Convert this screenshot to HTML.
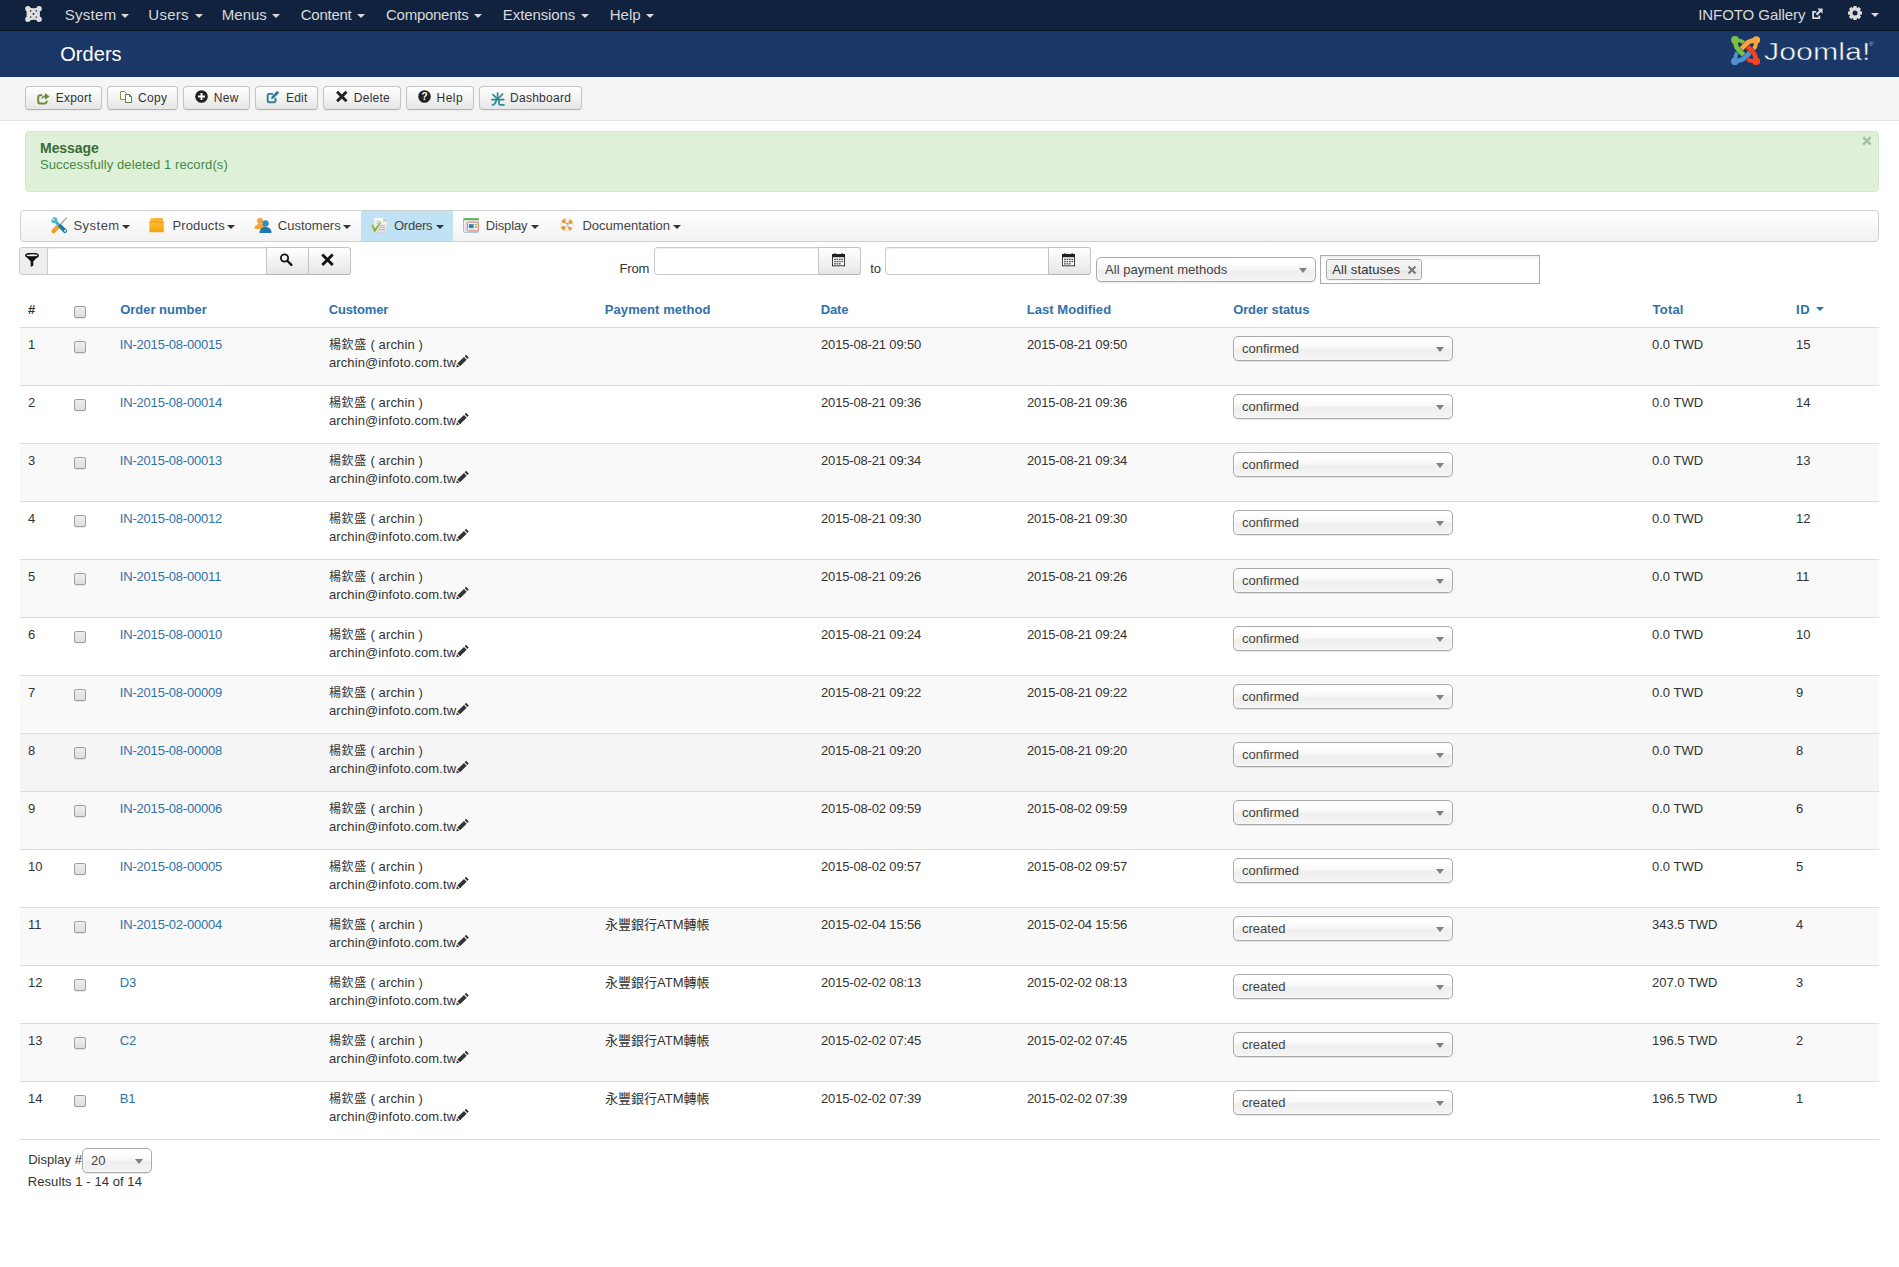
<!DOCTYPE html>
<html lang="en">
<head>
<meta charset="utf-8">
<title>Orders</title>
<style>
*{box-sizing:border-box}
html,body{margin:0;padding:0}
body{width:1899px;height:1267px;overflow:hidden;background:#fff;color:#333;font-family:"Liberation Sans","Noto Sans CJK TC",sans-serif;font-size:13px;line-height:18px;position:relative}
a{color:#3071a9;text-decoration:none}
svg{display:block}
/* navbar */
#nav{position:absolute;left:0;top:0;width:1899px;height:31px;background:#10223e;border-bottom:1px solid #0b1626}
#nav .logo{position:absolute;left:25px;top:6px}
#nav ul{list-style:none;margin:0;padding:0;position:absolute;left:55px;top:0}
#nav li{float:left;padding:0 10px;height:30px;line-height:30px;font-size:15px;color:#d9d9d9}
#nav .car{display:block;width:0;height:0;border-left:4px solid transparent;border-right:4px solid transparent;border-top:4px solid #d9d9d9;}
.rnav{position:absolute;top:0;height:30px;line-height:30px;font-size:15px;color:#d9d9d9}

.fx{position:relative;display:inline-block;white-space:nowrap}
.ni{position:absolute;top:0;height:30px;line-height:30px;font-size:15px;color:#d9d9d9;white-space:nowrap}
.sc{position:absolute;display:block;width:0;height:0;border-left:4px solid transparent;border-right:4px solid transparent;border-top:4px solid #3071a9}
.cN{letter-spacing:-0.2px}.cN a{position:relative;left:-0.2px}.cj{font-size:12px;letter-spacing:0.6px;position:relative;top:0.8px}.cj2{position:relative;top:0.8px}.c1{letter-spacing:0.12px}.c2{letter-spacing:0.1px}.cD{letter-spacing:-0.16px}
.cal svg{position:absolute;left:12.5px;top:5px}
/* header */
#header{position:absolute;left:0;top:31px;width:1899px;height:46px;background:#1a3867}
#header h1{position:absolute;left:61px;top:1px;margin:0;font-size:20px;line-height:45px;font-weight:normal;color:#fff}
/* subhead */
#subhead{position:absolute;left:0;top:77px;width:1899px;height:44px;background:#f5f5f5;border-bottom:1px solid #e3e3e3}
.btn{position:absolute;top:9px;height:24px;border:1px solid #c4c4c4;border-bottom-color:#b3b3b3;border-radius:4px;background:linear-gradient(#fff,#e6e6e6);font-size:12px;line-height:22px;color:#333;box-shadow:0 1px 2px rgba(0,0,0,.05);white-space:nowrap}
.btn span{position:absolute;top:0}
.btn svg{position:absolute}
/* alert */
#alert{position:absolute;left:25px;top:131px;width:1854px;height:61px;background:#dff0d8;border:1px solid #d6e9c6;border-radius:4px;color:#468847}
#alert h4{margin:0;position:absolute;left:14px;top:7px;font-size:14px;line-height:18px;font-weight:bold;color:#376c38}
#alert p{margin:0;position:absolute;left:14px;top:24px;font-size:13px;line-height:18px}
#alert .x{position:absolute;right:5.5px;top:0px;font-size:20px;line-height:18px;color:rgba(0,0,0,.22);font-weight:bold;text-shadow:0 1px 0 #fff}
/* hika menu */
#hmenu{position:absolute;left:20px;top:210px;width:1859px;height:32px;border:1px solid #d0d0d0;border-radius:4px;background:linear-gradient(#fff,#f2f2f2)}
#hmenu .it{position:absolute;top:0;height:30px;line-height:29px;font-size:13px;color:#444}
#hmenu .it.act{background:#c0e2f5}
#hmenu .it span{position:absolute;top:0;white-space:nowrap}
#hmenu .it i{position:absolute;top:14px;width:0;height:0;border-left:4px solid transparent;border-right:4px solid transparent;border-top:4px solid #333}
#hmenu svg{position:absolute}
/* filters */
.abs{position:absolute}
.inp{position:absolute;background:#fff;border:1px solid #ccc;box-shadow:inset 0 1px 1px rgba(0,0,0,.075)}
.gbtn{position:absolute;border:1px solid #c4c4c4;border-bottom-color:#b3b3b3;background:linear-gradient(#fff,#e6e6e6)}
.sel{position:absolute;border:1px solid #aaa;border-radius:5px;background:linear-gradient(#fff 20%,#f6f6f6 50%,#eee 52%,#f4f4f4 100%);box-shadow:0 0 3px #fff inset,0 1px 1px rgba(0,0,0,.1);color:#444;font-size:13px;white-space:nowrap}
.sel span{position:absolute;left:8px;top:0}
.sel i{position:absolute;right:8.5px;width:0;height:0;border-left:4px solid transparent;border-right:4px solid transparent;border-top:5px solid #808080}
/* table */
#tbl{position:absolute;left:20px;top:291px;width:1859px;border-collapse:collapse;table-layout:fixed}
#tbl th{height:36px;padding:10px 8px 0 8px;position:relative;text-align:left;vertical-align:top;font-weight:bold;color:#3071a9;line-height:18px;white-space:nowrap}
#tbl th.n{color:#333}
#tbl td{height:58px;padding:8px 8px 0 8px;vertical-align:top;border-top:1px solid #ddd;line-height:18px;white-space:nowrap}
#tbl tr.last td{border-bottom:1px solid #ddd}
#tbl tr.o td{background:#f9f9f9}
#tbl tr.hv td{background:#f5f5f5}
.cb{display:block;width:12px;height:12px;border:1px solid #a0a0a0;border-radius:2px;background:linear-gradient(#ededed,#dedede);box-shadow:0 1px 0 rgba(0,0,0,.08);margin:5px 0 0 -1px}
th .cb{margin-top:5px}
.ssel{position:relative;display:block;width:220px;height:25px;margin-top:0;border:1px solid #aaa;border-radius:5px;background:linear-gradient(#fff 20%,#f6f6f6 50%,#eee 52%,#f4f4f4 100%);box-shadow:0 0 3px #fff inset,0 1px 1px rgba(0,0,0,.1);color:#444;line-height:23px;padding-left:8px}
.ssel i{position:absolute;right:8.5px;top:10px;width:0;height:0;border-left:4px solid transparent;border-right:4px solid transparent;border-top:5px solid #808080}
.pw{position:relative;display:inline-block;width:14px;height:1px;vertical-align:baseline}.pen{position:absolute;left:-0.3px;top:-11.6px}
</style>
</head>
<body>
<div id="nav">
<svg class="logo" width="17" height="16" viewBox="0 0 17 16"><g fill="#dfdfdf"><circle cx="2.9" cy="2.7" r="2.7"/><circle cx="14.1" cy="2.7" r="2.7"/><circle cx="2.9" cy="13.3" r="2.7"/><circle cx="14.1" cy="13.3" r="2.7"/><path d="M2.5 1 Q8.5 3.6 14.5 1 Q15.4 8 14.5 15 Q8.5 12.4 2.5 15 Q0.6 8 2.5 1 Z"/></g><g fill="#10223e"><circle cx="8.5" cy="8" r="0.95"/><circle cx="5.7" cy="4.9" r="0.8" opacity=".9"/><circle cx="11.3" cy="4.9" r="0.8" opacity=".9"/><circle cx="5.7" cy="11.1" r="0.8" opacity=".9"/><circle cx="11.3" cy="11.1" r="0.8" opacity=".9"/></g></svg>
<div class="ni" style="left:65px"><span id="n0" class="fx" style="left:-0.29px;letter-spacing:0.298px">System</span></div><b class="car abs" style="left:121.2px;top:14px"></b>
<div class="ni" style="left:149px"><span id="n1" class="fx" style="left:-0.72px;letter-spacing:0.293px">Users</span></div><b class="car abs" style="left:195.2px;top:14px"></b>
<div class="ni" style="left:223px"><span id="n2" class="fx" style="left:-1.16px;letter-spacing:-0.017px">Menus</span></div><b class="car abs" style="left:272.2px;top:14px"></b>
<div class="ni" style="left:301px"><span id="n3" class="fx" style="left:-0.21px;letter-spacing:-0.273px">Content</span></div><b class="car abs" style="left:357.2px;top:14px"></b>
<div class="ni" style="left:386px"><span id="n4" class="fx" style="left:0.06px;letter-spacing:-0.274px">Components</span></div><b class="car abs" style="left:474.2px;top:14px"></b>
<div class="ni" style="left:503px"><span id="n5" class="fx" style="left:-0.16px;letter-spacing:-0.098px">Extensions</span></div><b class="car abs" style="left:581.2px;top:14px"></b>
<div class="ni" style="left:610px"><span id="n6" class="fx" style="left:-0.36px;letter-spacing:0.069px">Help</span></div><b class="car abs" style="left:646.2px;top:14px"></b>

<div class="ni" style="left:1699px"><span id="n7" class="fx" style="left:-0.84px;letter-spacing:-0.064px">INFOTO Gallery</span></div>
<svg class="abs" style="left:1810.8px;top:8.4px" width="12.4" height="12" viewBox="0 0 12 12"><path d="M1 3 H5 V4.8 H2.8 V9.2 H7.2 V7.6 H9 V11 H1 Z" fill="#d9d9d9"/><path d="M6.2 0.6 H11.4 V5.8 L9.6 4 L6 7.6 L4.4 6 L8 2.4 Z" fill="#d9d9d9"/></svg>
<svg class="abs" style="left:1847.7px;top:6.2px" width="14" height="14" viewBox="0 0 14 14"><g fill="#dcdcdc"><circle cx="7" cy="7" r="5.5"/><rect x="5.2" y="0" width="3.6" height="14" rx="0.7" transform="rotate(0 7 7)"/><rect x="5.2" y="0" width="3.6" height="14" rx="0.7" transform="rotate(45 7 7)"/><rect x="5.2" y="0" width="3.6" height="14" rx="0.7" transform="rotate(90 7 7)"/><rect x="5.2" y="0" width="3.6" height="14" rx="0.7" transform="rotate(135 7 7)"/></g><circle cx="7" cy="7" r="2.5" fill="#10223e"/></svg>
<b class="car abs" style="left:1871px;top:13px;margin:0;display:block;border-left:4px solid transparent;border-right:4px solid transparent;border-top:4px solid #d9d9d9;width:0;height:0"></b>
</div>
<div id="header"><h1><span id="t0" class="fx" style="left:-0.85px;letter-spacing:0.069px">Orders</span></h1>
<svg class="abs" style="left:1730.7px;top:4.6px" width="29.2" height="29.4" viewBox="0 0 29.2 29.4"><g fill="none" stroke-linecap="butt"><g transform="rotate(270 14.6 14.7)"><circle cx="4" cy="4" r="3.9" stroke="none" fill="#5091cd"/><path d="M4.6 5 C4.2 9.5 5.4 11.6 7.6 13.8 L12.7 18.9" stroke="#5091cd" stroke-width="4.7"/><path d="M5 4.5 C8.5 4 10.8 4.8 12.9 6.5" stroke="#5091cd" stroke-width="3.9"/></g><g transform="rotate(0 14.6 14.7)"><circle cx="4" cy="4" r="3.9" stroke="none" fill="#7ac143"/><path d="M4.6 5 C4.2 9.5 5.4 11.6 7.6 13.8 L12.7 18.9" stroke="#7ac143" stroke-width="4.7"/><path d="M5 4.5 C8.5 4 10.8 4.8 12.9 6.5" stroke="#7ac143" stroke-width="3.9"/></g><g transform="rotate(90 14.6 14.7)"><circle cx="4" cy="4" r="3.9" stroke="none" fill="#f9a541"/><path d="M4.6 5 C4.2 9.5 5.4 11.6 7.6 13.8 L12.7 18.9" stroke="#f9a541" stroke-width="4.7"/><path d="M5 4.5 C8.5 4 10.8 4.8 12.9 6.5" stroke="#f9a541" stroke-width="3.9"/></g><g transform="rotate(180 14.6 14.7)"><circle cx="4" cy="4" r="3.9" stroke="none" fill="#f44321"/><path d="M4.6 5 C4.2 9.5 5.4 11.6 7.6 13.8 L12.7 18.9" stroke="#f44321" stroke-width="4.7"/><path d="M5 4.5 C8.5 4 10.8 4.8 12.9 6.5" stroke="#f44321" stroke-width="3.9"/></g><g transform="rotate(270 14.6 14.7)"><path d="M9.5 15.7 L12.7 18.9" stroke="#5091cd" stroke-width="4.7"/></g></g></svg>
<div class="abs jm" style="left:1763.6px;top:3.2px;font-size:24.5px;line-height:36px;color:#fff;white-space:nowrap;transform-origin:0 50%;transform:scale(1.24,0.98);-webkit-text-stroke:0.5px #1a3867">Joomla!</div>
<div class="abs" style="left:1869px;top:10px;font-size:6px;line-height:6px;color:#aeb9c9">®</div>
</div>
</div>
<div id="subhead">
<div class="btn" style="left:25px;width:77px"><svg style="left:11px;top:6px" width="13" height="12" viewBox="0 0 13 12"><path d="M5.2 2.2 H3.6 A2.4 2.4 0 0 0 1.2 4.6 V8.2 A2.4 2.4 0 0 0 3.6 10.6 H7.4 A2.4 2.4 0 0 0 9.8 8.2 V7.8" fill="none" stroke="#6d8c3a" stroke-width="2"/><path d="M8 0 L12.6 3.4 L8 6.8 V4.6 C6.4 4.6 5.2 5.2 4.2 6.8 C4.4 4 5.8 2.4 8 2.2 Z" fill="#6d8c3a"/></svg><span style="left:31px"><span id="b0" class="fx" style="left:-1.16px;letter-spacing:0.188px">Export</span></span></div>
<div class="btn" style="left:107px;width:71px"><svg style="left:10.5px;top:3.2px" width="14" height="14" viewBox="0 0 14 14"><path d="M1.5 1.5 H5.5 L7.5 3.5 V9.5 H1.5 Z" fill="#fff" stroke="#8a9a3a" stroke-width="1"/><path d="M6.5 4.5 H10.5 L12.5 6.5 V12.5 H6.5 Z" fill="#fff" stroke="#4f8a4a" stroke-width="1"/><path d="M10.5 4.5 V6.5 H12.5" fill="none" stroke="#4f8a4a" stroke-width="1"/></svg><span style="left:31px"><span id="b1" class="fx" style="left:-1.04px;letter-spacing:0.312px">Copy</span></span></div>
<div class="btn" style="left:183px;width:67px"><svg style="left:11px;top:3px" width="13" height="13" viewBox="0 0 13 13"><circle cx="6.5" cy="6.5" r="6.3" fill="#222"/><path d="M6.5 3 V10 M3 6.5 H10" stroke="#fff" stroke-width="1.9"/></svg><span style="left:31px"><span id="b2" class="fx" style="left:-1.37px;letter-spacing:0.437px">New</span></span></div>
<div class="btn" style="left:255px;width:63px"><svg style="left:10.3px;top:3.2px" width="14" height="14" viewBox="0 0 14 14"><path d="M9.5 8 V11 A1.3 1.3 0 0 1 8.2 12.3 H3 A1.3 1.3 0 0 1 1.7 11 V5.2 A1.3 1.3 0 0 1 3 3.9 H7" fill="none" stroke="#2f7d95" stroke-width="1.9"/><path d="M11.2 0.8 L13.2 2.8 L7.6 8.4 L5 9 L5.6 6.4 Z" fill="#2f7d95"/></svg><span style="left:31px"><span id="b3" class="fx" style="left:-1.02px;letter-spacing:0.229px">Edit</span></span></div>
<div class="btn" style="left:323px;width:78px"><svg style="left:10.5px;top:3px" width="13.6" height="13" viewBox="0 0 13 13"><path d="M1.8 1.8 L11.2 11.2 M11.2 1.8 L1.8 11.2" stroke="#222" stroke-width="3" stroke-linecap="butt"/></svg><span style="left:31px"><span id="b4" class="fx" style="left:-1.2px;letter-spacing:0.251px">Delete</span></span></div>
<div class="btn" style="left:406px;width:68px"><svg style="left:10.8px;top:3.2px" width="13" height="13" viewBox="0 0 13 13"><circle cx="6.5" cy="6.5" r="6.3" fill="#222"/><text x="6.5" y="10" font-size="10" font-weight="bold" text-anchor="middle" fill="#fff" font-family="Liberation Sans, sans-serif">?</text></svg><span style="left:31px"><span id="b5" class="fx" style="left:-1.4px;letter-spacing:0.427px">Help</span></span></div>
<div class="btn" style="left:479px;width:103px"><svg style="left:11px;top:5.3px" width="14" height="14" viewBox="0 0 14 14"><g fill="none" stroke="#2a8a94" stroke-width="1.7" stroke-linecap="round"><path d="M6.6 1 V7"/><path d="M2 2.6 L6.4 7"/><path d="M11.6 2.2 L6.8 7"/><path d="M0.9 7.6 H12.8"/><path d="M5.4 7.8 C5 10.5 3.6 12.2 1.6 13"/><path d="M8 7.8 V11.4 C8 12.6 8.6 12.8 10 12.8 H13"/></g></svg><span style="left:31px"><span id="b6" class="fx" style="left:-1.01px;letter-spacing:0.275px">Dashboard</span></span></div>
</div>
<div id="alert"><h4><span id="a0" class="fx" style="left:0.08px;letter-spacing:-0.08px">Message</span></h4><p><span id="a1" class="fx" style="left:-0.02px;letter-spacing:0.091px">Successfully deleted 1 record(s)</span></p><svg class="abs" style="left:1836.4px;top:4.4px" width="9.8" height="9.8" viewBox="0 0 10 10"><path d="M1.2 1.2 L8.8 8.8 M8.8 1.2 L1.2 8.8" stroke="#a6bea1" stroke-width="2.5"/></svg></div>
<div id="hmenu">
<div class="it" style="left:19px;width:99px"><svg style="left:10.5px;top:5.5px" width="17" height="17" viewBox="0 0 17 17"><path d="M8.8 7.8 L15.6 0.9" stroke="#9a9a9a" stroke-width="1.1" stroke-linecap="round"/><path d="M7.4 9 L2.6 14.2" stroke="#f39a1e" stroke-width="4.2" stroke-linecap="round"/><path d="M6.4 9.6 L3 13.4" stroke="#fbd38a" stroke-width="0.8" stroke-dasharray="1 0.8"/><path d="M5.2 5.2 L8.6 8.4" stroke="#3fa6c6" stroke-width="2.6" stroke-linecap="round"/><circle cx="3.4" cy="3.2" r="3" fill="#4db3d1"/><path d="M0.6 1.2 L3.6 3.4" stroke="#eaf6fa" stroke-width="1.1"/><path d="M9.4 9.4 L14 14" stroke="#1d7a9c" stroke-width="4" stroke-linecap="round"/><circle cx="14.1" cy="13.8" r="1.05" fill="#fff"/></svg><span style="left:35px"><span id="m0" class="fx" style="left:-1.61px;letter-spacing:0.489px">System</span></span><i style="left:81.5px"></i></div>
<div class="it" style="left:118px;width:106px"><svg style="left:10px;top:5.8px" width="15.2" height="16" viewBox="0 0 16 16"><defs><linearGradient id="bx" x1="0" y1="0" x2="0" y2="1"><stop offset="0" stop-color="#fdbd35"/><stop offset="1" stop-color="#f4a20a"/></linearGradient></defs><path d="M0.6 5 L1.8 0.6 H14.2 L15.4 5 Z" fill="#f8b53a"/><path d="M2.2 1.6 H4.6" stroke="#dfe8d0" stroke-width="0.8"/><rect x="0.4" y="4.6" width="15.2" height="11" rx="0.8" fill="url(#bx)"/><path d="M0.4 5 H15.6" stroke="#e9960a" stroke-width="0.8"/></svg><span style="left:34px"><span id="m1" class="fx" style="left:-0.6px;letter-spacing:0.14px">Products</span></span><i style="left:88.3px"></i></div>
<div class="it" style="left:224px;width:116px"><svg style="left:9px;top:6px" width="18" height="17" viewBox="0 0 18 17"><circle cx="6" cy="4" r="3" fill="#f6a131"/><path d="M0.5 12 C0.5 8.5 3 7 6 7 C9 7 11.5 8.5 11.5 12 Z" fill="#f6a131"/><circle cx="11.5" cy="6.5" r="3.2" fill="#2e8fc4"/><path d="M5.5 16 C5.5 12 8 10 11.5 10 C15 10 17.5 12 17.5 16 Z" fill="#1f78ad"/></svg><span style="left:33px"><span id="m2" class="fx" style="left:-0.21px;letter-spacing:0.008px">Customers</span></span><i style="left:98.4px"></i></div>
<div class="it act" style="left:340px;width:92px"><svg style="left:9.5px;top:6px" width="17" height="17" viewBox="0 0 17 17"><defs><linearGradient id="pg" x1="0" y1="0" x2="0" y2="1"><stop offset="0" stop-color="#fdfdfd"/><stop offset="1" stop-color="#dcdcdc"/></linearGradient></defs><path d="M2.8 0.4 H12.2 L16.2 4.4 V15.6 H2.8 Z" fill="url(#pg)" stroke="#cfcfcf" stroke-width="0.5"/><path d="M12.2 0.4 V4.4 H16.2 Z" fill="#c4c4c4"/><path d="M5.5 4.3 H9.5 M5.5 6.4 H9 M8.5 8.4 H14 M8 10.4 H14 M7 12.5 H14" stroke="#b4b4b4" stroke-width="0.9"/><path d="M0.5 8.7 L1.9 7.6 L3.9 11.6 L9.3 4.9 L10.2 5.2 L3.7 15.6 Z" fill="#8cb21c"/></svg><span style="left:33px"><span id="m3" class="fx" style="left:-0.03px;letter-spacing:-0.249px">Orders</span></span><i style="left:74.7px"></i></div>
<div class="it" style="left:432px;width:96px"><svg style="left:10px;top:7px" width="16.4" height="14.8" viewBox="0 0 17 15.4"><rect x="0.5" y="0.5" width="16" height="14.4" rx="1.5" fill="#eef3f7" stroke="#9cbcd4"/><rect x="0.3" y="0.2" width="16.4" height="2.2" rx="1" fill="#62b545"/><rect x="1.4" y="3" width="2.2" height="11" fill="#dfe5ea"/><rect x="4.4" y="4.3" width="11.4" height="9.2" rx="1.2" fill="#fff" stroke="#e0605c" stroke-width="1"/><rect x="6" y="6.4" width="5" height="4.2" fill="#1f86b8"/><rect x="12" y="6" width="2.4" height="1.7" fill="#7cc35a"/><rect x="12" y="8.6" width="2.4" height="1.8" fill="#f39c1f"/><rect x="6.5" y="11.6" width="7" height="0.9" fill="#c9ced3"/></svg><span style="left:34px"><span id="m4" class="fx" style="left:-1.38px;letter-spacing:-0.11px">Display</span></span><i style="left:78.4px"></i></div>
<div class="it" style="left:528px;width:141px"><svg style="left:11.2px;top:7.3px" width="13.6" height="13.6" viewBox="0 0 15 15"><circle cx="7.5" cy="7.5" r="5" fill="none" stroke="#f3f3f3" stroke-width="4.4"/><circle cx="7.5" cy="7.5" r="5" fill="none" stroke="#e8962e" stroke-width="4.4" stroke-dasharray="3.93 3.93" stroke-dashoffset="1.96" transform="rotate(45 7.5 7.5)"/><circle cx="7.5" cy="7.5" r="7.2" fill="none" stroke="#e0d6c8" stroke-width="0.5"/><text x="7.5" y="9.6" font-size="6" text-anchor="middle" fill="#4a8fd0" font-weight="bold" font-family="Liberation Sans, sans-serif">?</text></svg><span style="left:34px"><span id="m5" class="fx" style="left:-0.6px;letter-spacing:0.021px">Documentation</span></span><i style="left:123.5px"></i></div>
</div>
<div id="filters">
<div class="gbtn" style="left:19px;top:247px;width:29px;height:28px;border-radius:3px 0 0 3px;background:#eee;border-color:#ccc"><svg class="abs" style="left:4.8px;top:4.5px" width="14" height="15" viewBox="0 0 14 15"><ellipse cx="7" cy="2.6" rx="6.2" ry="2.2" fill="none" stroke="#111" stroke-width="1.5"/><path d="M0.9 3.2 L5.7 8.4 V14 L8.3 12.6 V8.4 L13.1 3.2 Z" fill="#111"/></svg></div>
<div class="inp" style="left:47px;top:247px;width:220px;height:28px"></div>
<div class="gbtn" style="left:266px;top:247px;width:43px;height:28px"><svg class="abs" style="left:11.5px;top:5px" width="14" height="13" viewBox="0 0 14 14"><circle cx="5.4" cy="5.4" r="3.9" fill="none" stroke="#111" stroke-width="1.9"/><path d="M8.4 8.4 L12.8 12.8" stroke="#111" stroke-width="2.4" stroke-linecap="round"/></svg></div>
<div class="gbtn" style="left:308px;top:247px;width:43px;height:28px;border-radius:0 3px 3px 0"><svg class="abs" style="left:11px;top:5px" width="15" height="13.5" viewBox="0 0 14 14"><path d="M1.6 1.6 L12.4 12.4 M12.4 1.6 L1.6 12.4" stroke="#111" stroke-width="3"/></svg></div>
<div class="abs" style="left:620px;top:260px"><span id="g0" class="fx" style="left:-0.42px;letter-spacing:-0.21px">From</span></div>
<div class="inp" style="left:654px;top:247px;width:165px;height:28px;border-radius:3px 0 0 3px"></div>
<div class="gbtn cal" style="left:818px;top:247px;width:43px;height:28px;border-radius:0 3px 3px 0"><svg width="13" height="13.5" viewBox="0 0 15 15"><rect x="0.5" y="1.5" width="14" height="13" fill="#fff" stroke="#222" stroke-width="1"/><rect x="0" y="1" width="15" height="3.6" fill="#222"/><rect x="2.5" y="0" width="1.6" height="2.4" fill="#222"/><rect x="10.9" y="0" width="1.6" height="2.4" fill="#222"/><g fill="#555"><rect x="2.4" y="6.2" width="2" height="1.6"/><rect x="5.2" y="6.2" width="2" height="1.6"/><rect x="8" y="6.2" width="2" height="1.6"/><rect x="10.8" y="6.2" width="2" height="1.6"/><rect x="2.4" y="8.8" width="2" height="1.6"/><rect x="5.2" y="8.8" width="2" height="1.6"/><rect x="8" y="8.8" width="2" height="1.6"/><rect x="10.8" y="8.8" width="2" height="1.6"/><rect x="2.4" y="11.4" width="2" height="1.6"/><rect x="5.2" y="11.4" width="2" height="1.6"/><rect x="8" y="11.4" width="2" height="1.6"/></g></svg></div>
<div class="abs" style="left:870px;top:260px"><span id="g1" class="fx" style="left:0.34px;letter-spacing:-0.306px">to</span></div>
<div class="inp" style="left:885px;top:247px;width:165px;height:28px;border-radius:3px 0 0 3px"></div>
<div class="gbtn cal" style="left:1048px;top:247px;width:43px;height:28px;border-radius:0 3px 3px 0"><svg width="13" height="13.5" viewBox="0 0 15 15"><rect x="0.5" y="1.5" width="14" height="13" fill="#fff" stroke="#222" stroke-width="1"/><rect x="0" y="1" width="15" height="3.6" fill="#222"/><rect x="2.5" y="0" width="1.6" height="2.4" fill="#222"/><rect x="10.9" y="0" width="1.6" height="2.4" fill="#222"/><g fill="#555"><rect x="2.4" y="6.2" width="2" height="1.6"/><rect x="5.2" y="6.2" width="2" height="1.6"/><rect x="8" y="6.2" width="2" height="1.6"/><rect x="10.8" y="6.2" width="2" height="1.6"/><rect x="2.4" y="8.8" width="2" height="1.6"/><rect x="5.2" y="8.8" width="2" height="1.6"/><rect x="8" y="8.8" width="2" height="1.6"/><rect x="10.8" y="8.8" width="2" height="1.6"/><rect x="2.4" y="11.4" width="2" height="1.6"/><rect x="5.2" y="11.4" width="2" height="1.6"/><rect x="8" y="11.4" width="2" height="1.6"/></g></svg></div>
<div class="sel" style="left:1096px;top:257px;width:220px;height:25px;line-height:23px"><span><span id="g2" class="fx" style="left:0.0px;letter-spacing:0.05px">All payment methods</span></span><i style="top:10px"></i></div>
<div class="abs" style="left:1320px;top:255px;width:220px;height:29px;border:1px solid #aaa;background:linear-gradient(#eee 1%,#fff 15%)"><div class="abs" style="left:5px;top:3px;width:96px;height:21px;border:1px solid #aaa;border-radius:3px;background:linear-gradient(#f4f4f4 20%,#f0f0f0 50%,#e8e8e8 52%,#eee 100%);box-shadow:0 0 2px #fff inset,0 1px 0 rgba(0,0,0,.05);line-height:19px;color:#333"><span class="abs" style="left:5px;top:0;white-space:nowrap"><span id="g3" class="fx" style="left:0.26px;letter-spacing:0.121px">All statuses</span></span><svg class="abs" style="left:80px;top:5px" width="10" height="10" viewBox="0 0 10 10"><path d="M1.5 1.5 L8.5 8.5 M8.5 1.5 L1.5 8.5" stroke="#777" stroke-width="2"/></svg></div></div>
</div>
<table id="tbl"><colgroup><col style="width:47px"><col style="width:45px"><col style="width:209px"><col style="width:276px"><col style="width:216px"><col style="width:206px"><col style="width:206px"><col style="width:419px"><col style="width:144px"><col style="width:91px"></colgroup>
<thead><tr><th class="n"><span id="h0" class="fx" style="left:0.0px;letter-spacing:0.0px">#</span></th><th><span class="cb"></span></th><th><span id="h2" class="fx" style="left:0.14px;letter-spacing:-0.011px">Order number</span></th><th><span id="h3" class="fx" style="left:-0.24px;letter-spacing:-0.157px">Customer</span></th><th><span id="h4" class="fx" style="left:-0.2px;letter-spacing:0.066px">Payment method</span></th><th><span id="h5" class="fx" style="left:-0.2px;letter-spacing:-0.162px">Date</span></th><th><span id="h6" class="fx" style="left:-0.2px;letter-spacing:0.041px">Last Modified</span></th><th><span id="h7" class="fx" style="left:0.14px;letter-spacing:-0.091px">Order status</span></th><th><span id="h8" class="fx" style="left:0.6px;letter-spacing:0.186px">Total</span></th><th><span id="h9" class="fx" style="left:-0.04px;letter-spacing:0.6px">ID</span><b class="sc" style="left:28px;top:16px"></b></th></tr></thead><tbody>
<tr class="o"><td>1</td><td><span class="cb"></span></td><td class="cN"><a>IN-2015-08-00015</a></td><td><span class="cj">楊欽盛</span> <span class="c1">( archin )</span><br><span class="c2">archin@infoto.com.tw</span><span class="pw"><svg class="pen" width="13.6" height="13.6" viewBox="0 0 13 13"><path d="M9.6 0.8 L12.2 3.4 L10.9 4.7 L8.3 2.1 Z M7.6 2.8 L10.2 5.4 L3.8 11.8 L1.2 9.2 Z M0.8 9.9 L3.1 12.2 L0.3 12.7 Z" fill="#333"/></svg></span></td><td class="cP"></td><td class="cD">2015-08-21 09:50</td><td class="cD">2015-08-21 09:50</td><td><span class="ssel">confirmed<i></i></span></td><td>0.0 TWD</td><td>15</td></tr>
<tr class="e"><td>2</td><td><span class="cb"></span></td><td class="cN"><a>IN-2015-08-00014</a></td><td><span class="cj">楊欽盛</span> <span class="c1">( archin )</span><br><span class="c2">archin@infoto.com.tw</span><span class="pw"><svg class="pen" width="13.6" height="13.6" viewBox="0 0 13 13"><path d="M9.6 0.8 L12.2 3.4 L10.9 4.7 L8.3 2.1 Z M7.6 2.8 L10.2 5.4 L3.8 11.8 L1.2 9.2 Z M0.8 9.9 L3.1 12.2 L0.3 12.7 Z" fill="#333"/></svg></span></td><td class="cP"></td><td class="cD">2015-08-21 09:36</td><td class="cD">2015-08-21 09:36</td><td><span class="ssel">confirmed<i></i></span></td><td>0.0 TWD</td><td>14</td></tr>
<tr class="o"><td>3</td><td><span class="cb"></span></td><td class="cN"><a>IN-2015-08-00013</a></td><td><span class="cj">楊欽盛</span> <span class="c1">( archin )</span><br><span class="c2">archin@infoto.com.tw</span><span class="pw"><svg class="pen" width="13.6" height="13.6" viewBox="0 0 13 13"><path d="M9.6 0.8 L12.2 3.4 L10.9 4.7 L8.3 2.1 Z M7.6 2.8 L10.2 5.4 L3.8 11.8 L1.2 9.2 Z M0.8 9.9 L3.1 12.2 L0.3 12.7 Z" fill="#333"/></svg></span></td><td class="cP"></td><td class="cD">2015-08-21 09:34</td><td class="cD">2015-08-21 09:34</td><td><span class="ssel">confirmed<i></i></span></td><td>0.0 TWD</td><td>13</td></tr>
<tr class="e"><td>4</td><td><span class="cb"></span></td><td class="cN"><a>IN-2015-08-00012</a></td><td><span class="cj">楊欽盛</span> <span class="c1">( archin )</span><br><span class="c2">archin@infoto.com.tw</span><span class="pw"><svg class="pen" width="13.6" height="13.6" viewBox="0 0 13 13"><path d="M9.6 0.8 L12.2 3.4 L10.9 4.7 L8.3 2.1 Z M7.6 2.8 L10.2 5.4 L3.8 11.8 L1.2 9.2 Z M0.8 9.9 L3.1 12.2 L0.3 12.7 Z" fill="#333"/></svg></span></td><td class="cP"></td><td class="cD">2015-08-21 09:30</td><td class="cD">2015-08-21 09:30</td><td><span class="ssel">confirmed<i></i></span></td><td>0.0 TWD</td><td>12</td></tr>
<tr class="o"><td>5</td><td><span class="cb"></span></td><td class="cN"><a>IN-2015-08-00011</a></td><td><span class="cj">楊欽盛</span> <span class="c1">( archin )</span><br><span class="c2">archin@infoto.com.tw</span><span class="pw"><svg class="pen" width="13.6" height="13.6" viewBox="0 0 13 13"><path d="M9.6 0.8 L12.2 3.4 L10.9 4.7 L8.3 2.1 Z M7.6 2.8 L10.2 5.4 L3.8 11.8 L1.2 9.2 Z M0.8 9.9 L3.1 12.2 L0.3 12.7 Z" fill="#333"/></svg></span></td><td class="cP"></td><td class="cD">2015-08-21 09:26</td><td class="cD">2015-08-21 09:26</td><td><span class="ssel">confirmed<i></i></span></td><td>0.0 TWD</td><td>11</td></tr>
<tr class="e"><td>6</td><td><span class="cb"></span></td><td class="cN"><a>IN-2015-08-00010</a></td><td><span class="cj">楊欽盛</span> <span class="c1">( archin )</span><br><span class="c2">archin@infoto.com.tw</span><span class="pw"><svg class="pen" width="13.6" height="13.6" viewBox="0 0 13 13"><path d="M9.6 0.8 L12.2 3.4 L10.9 4.7 L8.3 2.1 Z M7.6 2.8 L10.2 5.4 L3.8 11.8 L1.2 9.2 Z M0.8 9.9 L3.1 12.2 L0.3 12.7 Z" fill="#333"/></svg></span></td><td class="cP"></td><td class="cD">2015-08-21 09:24</td><td class="cD">2015-08-21 09:24</td><td><span class="ssel">confirmed<i></i></span></td><td>0.0 TWD</td><td>10</td></tr>
<tr class="o"><td>7</td><td><span class="cb"></span></td><td class="cN"><a>IN-2015-08-00009</a></td><td><span class="cj">楊欽盛</span> <span class="c1">( archin )</span><br><span class="c2">archin@infoto.com.tw</span><span class="pw"><svg class="pen" width="13.6" height="13.6" viewBox="0 0 13 13"><path d="M9.6 0.8 L12.2 3.4 L10.9 4.7 L8.3 2.1 Z M7.6 2.8 L10.2 5.4 L3.8 11.8 L1.2 9.2 Z M0.8 9.9 L3.1 12.2 L0.3 12.7 Z" fill="#333"/></svg></span></td><td class="cP"></td><td class="cD">2015-08-21 09:22</td><td class="cD">2015-08-21 09:22</td><td><span class="ssel">confirmed<i></i></span></td><td>0.0 TWD</td><td>9</td></tr>
<tr class="e hv"><td>8</td><td><span class="cb"></span></td><td class="cN"><a>IN-2015-08-00008</a></td><td><span class="cj">楊欽盛</span> <span class="c1">( archin )</span><br><span class="c2">archin@infoto.com.tw</span><span class="pw"><svg class="pen" width="13.6" height="13.6" viewBox="0 0 13 13"><path d="M9.6 0.8 L12.2 3.4 L10.9 4.7 L8.3 2.1 Z M7.6 2.8 L10.2 5.4 L3.8 11.8 L1.2 9.2 Z M0.8 9.9 L3.1 12.2 L0.3 12.7 Z" fill="#333"/></svg></span></td><td class="cP"></td><td class="cD">2015-08-21 09:20</td><td class="cD">2015-08-21 09:20</td><td><span class="ssel">confirmed<i></i></span></td><td>0.0 TWD</td><td>8</td></tr>
<tr class="o"><td>9</td><td><span class="cb"></span></td><td class="cN"><a>IN-2015-08-00006</a></td><td><span class="cj">楊欽盛</span> <span class="c1">( archin )</span><br><span class="c2">archin@infoto.com.tw</span><span class="pw"><svg class="pen" width="13.6" height="13.6" viewBox="0 0 13 13"><path d="M9.6 0.8 L12.2 3.4 L10.9 4.7 L8.3 2.1 Z M7.6 2.8 L10.2 5.4 L3.8 11.8 L1.2 9.2 Z M0.8 9.9 L3.1 12.2 L0.3 12.7 Z" fill="#333"/></svg></span></td><td class="cP"></td><td class="cD">2015-08-02 09:59</td><td class="cD">2015-08-02 09:59</td><td><span class="ssel">confirmed<i></i></span></td><td>0.0 TWD</td><td>6</td></tr>
<tr class="e"><td>10</td><td><span class="cb"></span></td><td class="cN"><a>IN-2015-08-00005</a></td><td><span class="cj">楊欽盛</span> <span class="c1">( archin )</span><br><span class="c2">archin@infoto.com.tw</span><span class="pw"><svg class="pen" width="13.6" height="13.6" viewBox="0 0 13 13"><path d="M9.6 0.8 L12.2 3.4 L10.9 4.7 L8.3 2.1 Z M7.6 2.8 L10.2 5.4 L3.8 11.8 L1.2 9.2 Z M0.8 9.9 L3.1 12.2 L0.3 12.7 Z" fill="#333"/></svg></span></td><td class="cP"></td><td class="cD">2015-08-02 09:57</td><td class="cD">2015-08-02 09:57</td><td><span class="ssel">confirmed<i></i></span></td><td>0.0 TWD</td><td>5</td></tr>
<tr class="o"><td>11</td><td><span class="cb"></span></td><td class="cN"><a>IN-2015-02-00004</a></td><td><span class="cj">楊欽盛</span> <span class="c1">( archin )</span><br><span class="c2">archin@infoto.com.tw</span><span class="pw"><svg class="pen" width="13.6" height="13.6" viewBox="0 0 13 13"><path d="M9.6 0.8 L12.2 3.4 L10.9 4.7 L8.3 2.1 Z M7.6 2.8 L10.2 5.4 L3.8 11.8 L1.2 9.2 Z M0.8 9.9 L3.1 12.2 L0.3 12.7 Z" fill="#333"/></svg></span></td><td class="cP"><span class="cj2">永豐銀行</span>ATM<span class="cj2">轉帳</span></td><td class="cD">2015-02-04 15:56</td><td class="cD">2015-02-04 15:56</td><td><span class="ssel">created<i></i></span></td><td>343.5 TWD</td><td>4</td></tr>
<tr class="e"><td>12</td><td><span class="cb"></span></td><td class="cN"><a>D3</a></td><td><span class="cj">楊欽盛</span> <span class="c1">( archin )</span><br><span class="c2">archin@infoto.com.tw</span><span class="pw"><svg class="pen" width="13.6" height="13.6" viewBox="0 0 13 13"><path d="M9.6 0.8 L12.2 3.4 L10.9 4.7 L8.3 2.1 Z M7.6 2.8 L10.2 5.4 L3.8 11.8 L1.2 9.2 Z M0.8 9.9 L3.1 12.2 L0.3 12.7 Z" fill="#333"/></svg></span></td><td class="cP"><span class="cj2">永豐銀行</span>ATM<span class="cj2">轉帳</span></td><td class="cD">2015-02-02 08:13</td><td class="cD">2015-02-02 08:13</td><td><span class="ssel">created<i></i></span></td><td>207.0 TWD</td><td>3</td></tr>
<tr class="o"><td>13</td><td><span class="cb"></span></td><td class="cN"><a>C2</a></td><td><span class="cj">楊欽盛</span> <span class="c1">( archin )</span><br><span class="c2">archin@infoto.com.tw</span><span class="pw"><svg class="pen" width="13.6" height="13.6" viewBox="0 0 13 13"><path d="M9.6 0.8 L12.2 3.4 L10.9 4.7 L8.3 2.1 Z M7.6 2.8 L10.2 5.4 L3.8 11.8 L1.2 9.2 Z M0.8 9.9 L3.1 12.2 L0.3 12.7 Z" fill="#333"/></svg></span></td><td class="cP"><span class="cj2">永豐銀行</span>ATM<span class="cj2">轉帳</span></td><td class="cD">2015-02-02 07:45</td><td class="cD">2015-02-02 07:45</td><td><span class="ssel">created<i></i></span></td><td>196.5 TWD</td><td>2</td></tr>
<tr class="e last"><td>14</td><td><span class="cb"></span></td><td class="cN"><a>B1</a></td><td><span class="cj">楊欽盛</span> <span class="c1">( archin )</span><br><span class="c2">archin@infoto.com.tw</span><span class="pw"><svg class="pen" width="13.6" height="13.6" viewBox="0 0 13 13"><path d="M9.6 0.8 L12.2 3.4 L10.9 4.7 L8.3 2.1 Z M7.6 2.8 L10.2 5.4 L3.8 11.8 L1.2 9.2 Z M0.8 9.9 L3.1 12.2 L0.3 12.7 Z" fill="#333"/></svg></span></td><td class="cP"><span class="cj2">永豐銀行</span>ATM<span class="cj2">轉帳</span></td><td class="cD">2015-02-02 07:39</td><td class="cD">2015-02-02 07:39</td><td><span class="ssel">created<i></i></span></td><td>196.5 TWD</td><td>1</td></tr>
</tbody></table>
<div id="foot"><div class="abs" style="left:28px;top:1151px"><span id="f0" class="fx" style="left:0.2px;letter-spacing:0.04px">Display #</span></div>
<div class="sel" style="left:82px;top:1148px;width:70px;height:25px;line-height:23px"><span>20</span><i style="top:10px"></i></div>
<div class="abs" style="left:28px;top:1173px"><span id="f1" class="fx" style="left:-0.22px;letter-spacing:0.073px">Results 1 - 14 of 14</span></div></div>
</body>
</html>
